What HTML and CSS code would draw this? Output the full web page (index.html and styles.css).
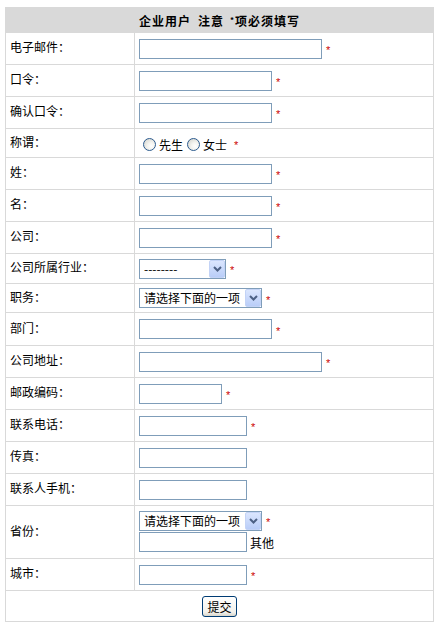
FILE: index.html
```html
<!DOCTYPE html>
<html lang="zh-CN">
<head>
<meta charset="utf-8">
<title>企业用户注册</title>
<link rel="stylesheet" href="styles.css">
</head>
<body>
<div class="wrap">
<form class="regform" onsubmit="return false">
<table class="form">
<colgroup><col class="c1"><col class="c2"></colgroup>
<tr class="head"><td colspan="2"><span>企业用户</span><span class="h2">注意</span><span class="hstar">*</span><span>项必须填写</span></td></tr>
<tr><td class="label">电子邮件：</td><td><div class="field"><input class="w183" type="text"><span class="req">*</span></div></td></tr>
<tr><td class="label">口令：</td><td><div class="field"><input class="w133" type="password"><span class="req">*</span></div></td></tr>
<tr><td class="label">确认口令：</td><td><div class="field"><input class="w133" type="password"><span class="req">*</span></div></td></tr>
<tr class="h29"><td class="label">称谓：</td><td><div class="field radios"><input type="radio" name="t" class="r1"><span>先生</span><input type="radio" name="t" class="r2"><span>女士</span><span class="req rq2">*</span></div></td></tr>
<tr><td class="label">姓：</td><td><div class="field"><input class="w133" type="text"><span class="req">*</span></div></td></tr>
<tr><td class="label">名：</td><td><div class="field"><input class="w133" type="text"><span class="req">*</span></div></td></tr>
<tr><td class="label">公司：</td><td><div class="field"><input class="w133" type="text"><span class="req">*</span></div></td></tr>
<tr class="h30"><td class="label">公司所属行业：</td><td><div class="field"><span class="sel s87"><select><option>--------</option></select><span class="btn"><svg width="9" height="6" viewBox="0 0 9 6"><path d="M1 1 L4.5 4.5 L8 1" fill="none" stroke="#4d6185" stroke-width="2"/></svg></span></span><span class="req">*</span></div></td></tr>
<tr class="h29"><td class="label">职务：</td><td><div class="field"><span class="sel s123"><select><option>请选择下面的一项</option></select><span class="btn"><svg width="9" height="6" viewBox="0 0 9 6"><path d="M1 1 L4.5 4.5 L8 1" fill="none" stroke="#4d6185" stroke-width="2"/></svg></span></span><span class="req">*</span></div></td></tr>
<tr class="h33"><td class="label">部门：</td><td><div class="field"><input class="w133" type="text"><span class="req">*</span></div></td></tr>
<tr><td class="label">公司地址：</td><td><div class="field"><input class="w183" type="text"><span class="req">*</span></div></td></tr>
<tr><td class="label">邮政编码：</td><td><div class="field"><input class="w83" type="text"><span class="req">*</span></div></td></tr>
<tr><td class="label">联系电话：</td><td><div class="field"><input class="w108" type="text"><span class="req">*</span></div></td></tr>
<tr><td class="label">传真：</td><td><div class="field"><input class="w108" type="text"></div></td></tr>
<tr><td class="label">联系人手机：</td><td><div class="field"><input class="w108" type="text"></div></td></tr>
<tr class="h53"><td class="label">省份：</td><td><div class="stack"><div class="field"><span class="sel s123"><select><option>请选择下面的一项</option></select><span class="btn"><svg width="9" height="6" viewBox="0 0 9 6"><path d="M1 1 L4.5 4.5 L8 1" fill="none" stroke="#4d6185" stroke-width="2"/></svg></span></span><span class="req">*</span></div><div class="field"><input class="w108" type="text"><span class="other">其他</span></div></div></td></tr>
<tr><td class="label">城市：</td><td><div class="field"><input class="w108" type="text"><span class="req">*</span></div></td></tr>
<tr class="h31"><td colspan="2" class="center"><button class="submit" type="submit">提交</button></td></tr>
</table>
</form>
</div>
</body>
</html>
```

FILE: styles.css
```css
html, body {
  margin: 0;
  padding: 0;
  background: #fff;
}
body {
  font-family: "Noto Sans CJK SC", "Noto Sans", sans-serif;
  font-size: 12px;
  color: #000;
}
.wrap {
  padding: 7px 0 0 5px;
}
.regform {
  margin: 0;
}
.form {
  border-collapse: separate;
  border-spacing: 0;
  table-layout: fixed;
  width: 429px;
  border-top: 1px solid #d9d9d9;
  border-left: 1px solid #d9d9d9;
}
.c1 { width: 129px; }
.c2 { width: 299px; }
.form td {
  box-sizing: border-box;
  height: 32px;
  padding: 0 4px;
  border-right: 1px solid #d9d9d9;
  border-bottom: 1px solid #d9d9d9;
  vertical-align: middle;
  line-height: 14px;
}
.form .head td {
  height: 25px;
  background: #d9d9d9;
  text-align: center;
  font-weight: bold;
  letter-spacing: 1px;
}
.h2 { margin-left: 7px; }
.hstar {
  font-size: 8px;
  vertical-align: 3px;
  margin-left: 6px;
  letter-spacing: 0;
  margin-right: 1px;
}
.form .h29 td { height: 29px; }
.form .h30 td { height: 30px; }
.form .h33 td { height: 33px; }
.form .h53 td { height: 53px; }
.form .h31 td { height: 31px; }
.form td.label {
  padding-bottom: 3px;
}
.field {
  display: flex;
  align-items: center;
}
.stack {
  display: flex;
  flex-direction: column;
  gap: 1px;
  padding-bottom: 2px;
}
input[type="text"], input[type="password"] {
  box-sizing: border-box;
  height: 20px;
  margin: 0;
  padding: 0 2px;
  border: 1px solid #7f9db9;
  background: #fff;
  font: inherit;
  outline: none;
}
.w183 { width: 183px; }
.w133 { width: 133px; }
.w108 { width: 108px; }
.w83 { width: 83px; }
.req {
  color: #cc0000;
  margin-left: 4px;
  padding-top: 3px;
  font-family: "Liberation Sans", sans-serif;
  font-size: 11px;
  line-height: 14px;
}
.other {
  margin-left: 3px;
  padding-top: 3px;
}
.radios {
  padding-top: 2px;
}
.radios input[type="radio"] {
  appearance: none;
  -webkit-appearance: none;
  box-sizing: border-box;
  width: 13px;
  height: 13px;
  margin: 0 3px 0 4px;
  border: 1px solid #2c5b8e;
  border-radius: 50%;
  background: radial-gradient(circle at 65% 65%, #ffffff 0%, #f4f4f0 35%, #cfcfc8 100%);
}
.radios .r2 { margin-left: 5px; }
.radios span { padding-top: 2px; }
.radios .rq2 { margin-left: 7px; }
.sel {
  position: relative;
  display: inline-block;
  height: 20px;
}
.s87 { width: 87px; }
.s123 { width: 123px; }
.sel select {
  appearance: none;
  -webkit-appearance: none;
  box-sizing: border-box;
  width: 100%;
  height: 20px;
  margin: 0;
  padding: 0 0 0 4px;
  border: 1px solid #7f9db9;
  border-radius: 0;
  background: #fff;
  font: inherit;
  color: #000;
}
.sel .btn {
  position: absolute;
  top: 1px;
  right: 1px;
  bottom: 1px;
  width: 16px;
  box-sizing: border-box;
  border: 1px solid #c3d3f6;
  border-radius: 2px;
  background: linear-gradient(#dbe6fe, #b9cdf8);
  display: flex;
  align-items: center;
  justify-content: center;
  pointer-events: none;
}
.form td.center {
  text-align: center;
  padding: 0;
}
.submit {
  box-sizing: border-box;
  width: 35px;
  height: 21px;
  margin: 0;
  padding: 0;
  border: 1px solid #003c74;
  border-radius: 3px;
  background: linear-gradient(#ffffff, #f2f1ec 80%, #d8d6cc);
  font: inherit;
  color: #000;
  line-height: 17px;
}
```
